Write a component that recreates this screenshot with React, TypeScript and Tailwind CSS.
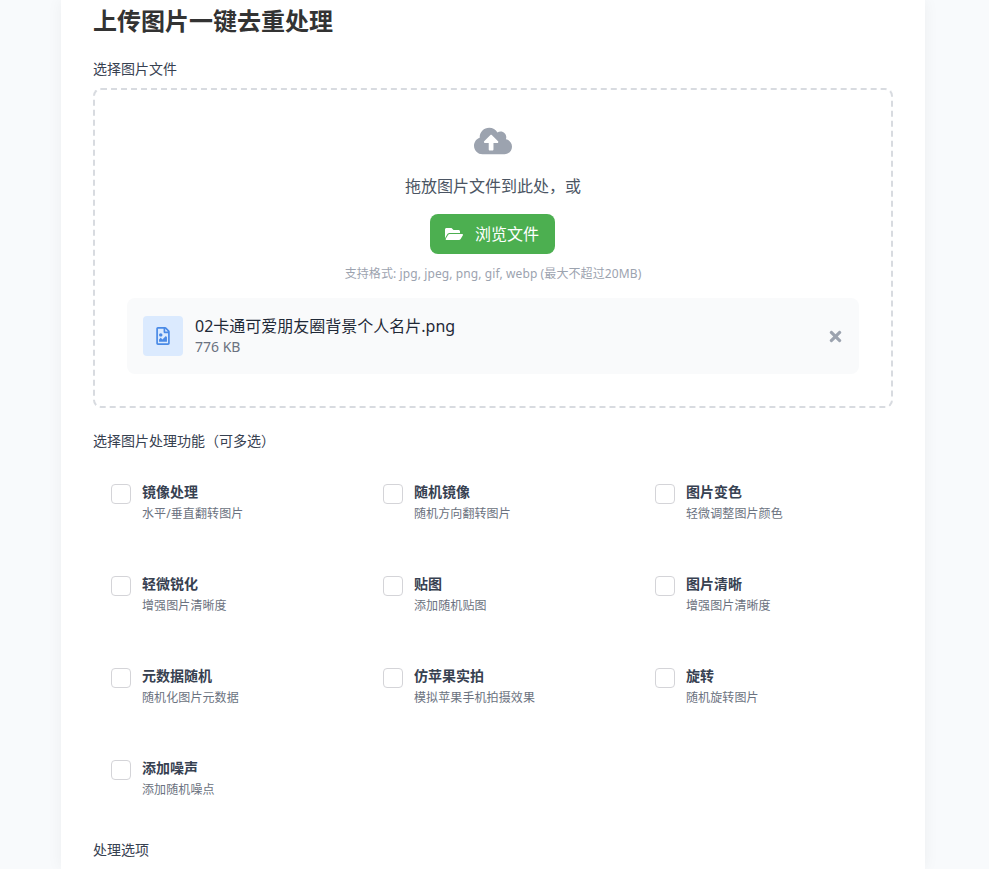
import { FaCloudUploadAlt, FaFolderOpen, FaRegFileImage, FaTimes } from 'react-icons/fa';

const options = [
  { title: '镜像处理', desc: '水平/垂直翻转图片' },
  { title: '随机镜像', desc: '随机方向翻转图片' },
  { title: '图片变色', desc: '轻微调整图片颜色' },
  { title: '轻微锐化', desc: '增强图片清晰度' },
  { title: '贴图', desc: '添加随机贴图' },
  { title: '图片清晰', desc: '增强图片清晰度' },
  { title: '元数据随机', desc: '随机化图片元数据' },
  { title: '仿苹果实拍', desc: '模拟苹果手机拍摄效果' },
  { title: '旋转', desc: '随机旋转图片' },
  { title: '添加噪声', desc: '添加随机噪点' },
];

function OptionItem({ title, desc }: { title: string; desc: string }) {
  return (
    <label className="flex items-start gap-[11px] h-[76px] pl-[18px] pt-[16px]">
      <span className="w-[20px] h-[20px] rounded border border-[#d4d4d8] bg-white shrink-0" />
      <span className="flex flex-col -mt-[1px]">
        <span className="text-[14px] leading-[17px] font-semibold text-[#374151]">{title}</span>
        <span className="text-[12px] leading-[17px] mt-[5px] text-[#6b7280] tracking-[0.1px]">{desc}</span>
      </span>
    </label>
  );
}

function App() {
  return (
    <div
      className="h-[869px] overflow-hidden bg-[#f8fafc] flex justify-center pr-[3px]"
      style={{ fontFamily: '"Noto Sans", "Noto Sans CJK SC", sans-serif' }}
    >
      <main className="w-[864px] h-full bg-white shadow-[0_0_15px_rgba(0,0,0,0.05)] px-[32px] shrink-0">
        <h1 className="text-[24px] leading-[32px] font-bold text-[#333333] mt-[5px]">上传图片一键去重处理</h1>

        <div className="text-[14px] leading-[18px] text-[#374151] mt-[23px]">选择图片文件</div>
        <section className="mt-[10px] h-[320px] border-2 border-dashed border-[#d8dbe0] rounded-lg px-[32px] pt-[32px] flex flex-col items-center">
          <FaCloudUploadAlt className="text-[#9ca3af] text-[38px]" />
          <p className="text-[16px] leading-[22px] text-[#4b5563] mt-[15px]">拖放图片文件到此处，或</p>
          <button
            type="button"
            className="mt-[17px] mr-[2px] w-[125px] h-[40px] rounded-lg bg-[#4caf50] text-white text-[16px] flex items-center justify-center gap-[12px]"
          >
            <FaFolderOpen className="text-[18px]" />
            浏览文件
          </button>
          <p className="text-[12px] leading-[16px] text-[#9ca3af] mt-[12px] tracking-[0.1px]">支持格式: jpg, jpeg, png, gif, webp (最大不超过20MB)</p>

          <div className="mt-[16px] w-full h-[76px] rounded-lg bg-[#f9fafb] flex items-center pl-[16px] pr-[15px]">
            <div className="w-[40px] h-[40px] rounded bg-[#dbeafe] flex items-center justify-center text-[#4a8ae6]">
              <FaRegFileImage className="text-[18px]" />
            </div>
            <div className="ml-[12px] flex-1">
              <div className="text-[16px] leading-[22px] text-[#1f2937]">02卡通可爱朋友圈背景个人名片.png</div>
              <div className="text-[14px] leading-[20px] text-[#6b7280]">776 KB</div>
            </div>
            <FaTimes className="text-[#9ca3af] text-[17px]" />
          </div>
        </section>

        <div className="text-[14px] leading-[18px] text-[#374151] mt-[24px]">选择图片处理功能（可多选）</div>
        <div className="grid grid-cols-3 gap-[16px] mt-[18px]">
          {options.map((o) => (
            <OptionItem key={o.title} title={o.title} desc={o.desc} />
          ))}
        </div>

        <div className="text-[14px] leading-[18px] text-[#374151] mt-[21px]">处理选项</div>
      </main>
    </div>
  );
}

export default App;
